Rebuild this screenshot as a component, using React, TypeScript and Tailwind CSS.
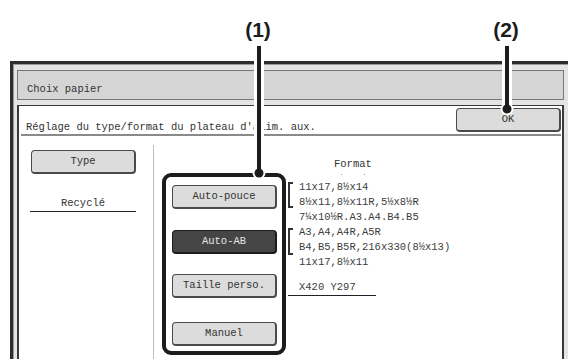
import React from 'react';

const mono = "font-['Liberation_Mono','DejaVu_Sans_Mono',monospace]";

function PanelButton({ label, active = false, className = '' }: { label: string; active?: boolean; className?: string }) {
  return (
    <div
      className={`flex h-[24px] w-[105px] items-center justify-center rounded-[4px] border border-r-2 border-b-2 text-[10.5px] leading-none ${
        active ? 'border-[#1c1c1c] bg-[#454545] text-[#e6e6e6]' : 'border-[#4a4a4a] bg-[#dcdcdc] text-[#333]'
      } ${className}`}
    >
      {label}
    </div>
  );
}

function SizeGroup({ lines, bracketTop, bracketHeight }: { lines: string[]; bracketTop: string; bracketHeight: string }) {
  return (
    <div className="flex">
      <div className="w-[11px]">
        <div className={`${bracketTop} ${bracketHeight} w-[5px] border-y-2 border-l-2 border-[#333]`} />
      </div>
      <div className="leading-[15px]">
        {lines.map((l) => (
          <div key={l} className="whitespace-pre">
            {l}
          </div>
        ))}
      </div>
    </div>
  );
}

export default function App() {
  return (
    <div className={`relative h-[359px] w-[568px] overflow-hidden bg-white ${mono} text-[10.5px] text-[#333]`}>
      <div className="h-[61px]" />

      {/* window frame */}
      <div className="ml-[10px] w-[570px] border-l-[3px] border-t-[3px] border-[#2e2e2e]">
        <div className="h-[300px] border-l border-t border-[#9a9a9a] bg-[#e4e4e4] pl-[3px] pt-[5px]">
          <div className="h-[30px] w-[547px] border border-[#777] bg-[#d5d5d5] pl-[9px] pt-[11px] leading-[14px]">Choix papier</div>

          <div className="mt-[5px] h-[260px] w-[547px] border-x-2 border-t border-[#3a3a3a] bg-white">
            <div className="ml-[2px] mr-[1px] flex h-[30px] justify-between border-b-2 border-[#8a8a8a]">
              <div className="mt-[14px] pl-[5px] leading-[14px]">Réglage du type/format du plateau d'alim. aux.</div>
              <PanelButton label="OK" className="mt-[2px]" />
            </div>

            <div className="flex h-[230px]">
              <div className="w-[134px]">
                <PanelButton label="Type" className="ml-[12px] mt-[14px]" />
                <div className="ml-[11px] mt-[22px] w-[106px] border-b border-[#222] text-center leading-[15px]">Recyclé</div>
              </div>
              <div className="mt-[9px] w-px bg-[#bdbdbd]" />

              <div className="flex-1 pl-[8px] pt-[21px]">
                <div className="pl-[172px] leading-[14px]">Format</div>
                <div className="mt-[2px] flex items-start">
                  <div className="w-[124px] rounded-[9px] border-4 border-[#1c1c1c] pb-[5px] pl-[6px] pt-[8px]">
                    <PanelButton label="Auto-pouce" />
                    <PanelButton label="Auto-AB" active className="mt-[21px]" />
                    <PanelButton label="Taille perso." className="mt-[20px]" />
                    <PanelButton label="Manuel" className="mt-[24px]" />
                  </div>

                  <div className="ml-[2px] text-[#3c3c3c]">
                    <div className="flex h-[7px] items-start pt-[1px]">
                      <div className="ml-[53px] h-px w-px bg-[#999]" />
                      <div className="ml-[22px] h-px w-px bg-[#999]" />
                    </div>
                    <SizeGroup
                      lines={['11x17,8½x14', '8½x11,8½x11R,5½x8½R', '7¼x10½R.A3.A4.B4.B5']}
                      bracketTop="mt-[2px]"
                      bracketHeight="h-[26px]"
                    />
                    <SizeGroup
                      lines={['A3,A4,A4R,A5R', 'B4,B5,B5R,216x330(8½x13)', '11x17,8½x11']}
                      bracketTop="mt-[3px]"
                      bracketHeight="h-[27px]"
                    />
                    <div className="mt-[10px] w-[88px] border-b border-[#222] pl-[11px] leading-[15px]">X420 Y297</div>
                  </div>
                </div>
              </div>
            </div>
          </div>
        </div>
      </div>

      {/* callouts */}
      <svg className="pointer-events-none absolute left-0 top-0" width="568" height="359" viewBox="0 0 568 359">
        <line x1="259" y1="46" x2="259" y2="170" stroke="#fff" strokeWidth="10" />
        <line x1="507" y1="46" x2="507" y2="106" stroke="#fff" strokeWidth="10" />
        <circle cx="259" cy="173" r="6.5" fill="#fff" />
        <circle cx="507" cy="109" r="6.5" fill="#fff" />
        <line x1="259" y1="46" x2="259" y2="173" stroke="#1c1c1c" strokeWidth="4" />
        <line x1="507" y1="46" x2="507" y2="109" stroke="#1c1c1c" strokeWidth="4" />
        <circle cx="259" cy="173" r="4.5" fill="#1c1c1c" />
        <circle cx="507" cy="109" r="4.5" fill="#1c1c1c" />
      </svg>
      <div className="absolute left-[238px] top-[18px] w-[40px] text-center font-['Liberation_Sans',Arial,sans-serif] text-[21px] font-bold leading-[24px] text-[#1c1c1c]">
        (1)
      </div>
      <div className="absolute left-[486px] top-[18px] w-[40px] text-center font-['Liberation_Sans',Arial,sans-serif] text-[21px] font-bold leading-[24px] text-[#1c1c1c]">
        (2)
      </div>
    </div>
  );
}
